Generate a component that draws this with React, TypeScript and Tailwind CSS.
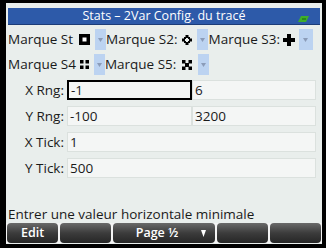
import React from 'react';

const font = { fontFamily: '"Open Sans", "Noto Sans", sans-serif' };

function MarkIcon({ kind }: { kind: number }) {
  if (kind === 1)
    return (
      <svg width="11" height="11" viewBox="0 0 11 11">
        <rect x="0" y="0" width="11" height="11" fill="#000" />
        <rect x="3.5" y="3.5" width="4" height="4" fill="#fff" />
      </svg>
    );
  if (kind === 2)
    return (
      <svg width="10" height="10" viewBox="0 0 10 10">
        <rect x="3.5" y="0" width="3" height="3" fill="#000" />
        <rect x="0" y="3.5" width="3" height="3" fill="#000" />
        <rect x="7" y="3.5" width="3" height="3" fill="#000" />
        <rect x="3.5" y="7" width="3" height="3" fill="#000" />
        <rect x="2" y="2" width="2" height="2" fill="#000" />
        <rect x="6" y="2" width="2" height="2" fill="#000" />
        <rect x="2" y="6" width="2" height="2" fill="#000" />
        <rect x="6" y="6" width="2" height="2" fill="#000" />
      </svg>
    );
  if (kind === 3)
    return (
      <svg width="12" height="12" viewBox="0 0 12 12">
        <rect x="4" y="0" width="4" height="12" fill="#000" />
        <rect x="0" y="4" width="12" height="4" fill="#000" />
      </svg>
    );
  if (kind === 4)
    return (
      <svg width="9" height="9" viewBox="0 0 9 9">
        <rect x="0" y="0" width="3.5" height="3.5" fill="#000" />
        <rect x="5.5" y="0" width="3.5" height="3.5" fill="#000" />
        <rect x="0" y="5.5" width="3.5" height="3.5" fill="#000" />
        <rect x="5.5" y="5.5" width="3.5" height="3.5" fill="#000" />
      </svg>
    );
  return (
    <svg width="10" height="10" viewBox="0 0 10 10">
      <rect x="0" y="0" width="3.5" height="3.5" fill="#000" />
      <rect x="6.5" y="0" width="3.5" height="3.5" fill="#000" />
      <rect x="3" y="3" width="4" height="4" fill="#000" />
      <rect x="0" y="6.5" width="3.5" height="3.5" fill="#000" />
      <rect x="6.5" y="6.5" width="3.5" height="3.5" fill="#000" />
    </svg>
  );
}

function Mark({
  label,
  kind,
  iconW,
  boxW = 'w-[11px]',
}: {
  label: string;
  kind: number;
  iconW: string;
  boxW?: string;
}) {
  return (
    <div className="flex items-center h-full">
      <span className="whitespace-nowrap">{label}</span>
      <div className={`${iconW} h-full flex items-center justify-center`}>
        <MarkIcon kind={kind} />
      </div>
      <div className={`${boxW} h-full bg-[#bcd3f1] flex items-center justify-center`}>
        <svg width="5" height="4" viewBox="0 0 5 4">
          <polygon points="0,0 5,0 2.5,4" fill="#8b9cb8" />
        </svg>
      </div>
    </div>
  );
}

function Field({ value, className = '' }: { value: string; className?: string }) {
  return (
    <div className={`h-full bg-[#f4f6f5] border border-[#dbe1de] flex items-center pl-[2px] ${className}`}>
      {value}
    </div>
  );
}

function SoftKey({ label, className = 'w-[51px]', arrow = false }: { label: string; className?: string; arrow?: boolean }) {
  return (
    <div
      className={`${className} h-full rounded-[4px] bg-gradient-to-b from-[#6a6a6a] via-[#3c3c3c] to-[#262626] text-white text-[12.5px] font-semibold flex items-center justify-center relative`}
    >
      {label}
      {arrow && (
        <svg className="absolute right-[9px] top-[7px]" width="5" height="7" viewBox="0 0 5 7">
          <polygon points="0,0 5,0 2.5,7" fill="#fff" />
        </svg>
      )}
    </div>
  );
}

export default function App() {
  return (
    <div className="w-[326px] h-[248px] bg-black pt-[3px] pl-[6px] pr-[4px] pb-[4px]" style={font}>
      <div className="h-full bg-[#e9eeec] flex flex-col text-[13.5px] text-[#1a1a1a]">
        <div className="mx-[2px] mt-[5px] h-[17px] bg-[#2d5aa9] border-b border-[#1c3c78] text-white text-[12.5px] flex items-center justify-center relative">
          Stats – 2Var Config. du tracé
          <svg className="absolute right-[11px] bottom-[2px]" width="11" height="6" viewBox="0 0 11 6">
            <polygon points="3,0 11,0 8,6 0,6" fill="#3fae2a" />
            <rect x="4" y="2" width="4" height="2" fill="#2a8a1a" />
          </svg>
        </div>

        <div className="mt-[4px] h-[21px] pl-[2px] flex items-center">
          <Mark label="Marque St" kind={1} iconW="w-[22px]" />
          <Mark label="Marque S2:" kind={2} iconW="w-[20px]" />
          <Mark label="Marque S3:" kind={3} iconW="w-[19px]" boxW="w-[14px]" />
        </div>
        <div className="mt-[4px] h-[21px] pl-[2px] flex items-center">
          <Mark label="Marque S4" kind={4} iconW="w-[18px]" />
          <Mark label="Marque S5:" kind={5} iconW="w-[22px]" />
        </div>

        <div className="mt-[5px] flex flex-col gap-[6px]">
          <div className="h-[20px] flex items-center">
            <div className="w-[61px] text-right pr-[3px]">X Rng:</div>
            <Field value="-1" className="w-[125px] !border-2 !border-black" />
            <Field value="6" className="flex-1 mr-[6px]" />
          </div>
          <div className="h-[20px] flex items-center">
            <div className="w-[61px] text-right pr-[3px]">Y Rng:</div>
            <Field value="-100" className="w-[125px]" />
            <Field value="3200" className="flex-1 mr-[6px]" />
          </div>
          <div className="h-[20px] flex items-center">
            <div className="w-[61px] text-right pr-[3px]">X Tick:</div>
            <Field value="1" className="flex-1 mr-[6px]" />
          </div>
          <div className="h-[20px] flex items-center">
            <div className="w-[61px] text-right pr-[3px]">Y Tick:</div>
            <Field value="500" className="flex-1 mr-[6px]" />
          </div>
        </div>

        <div className="mt-auto pl-[2px] leading-[16px]">Entrer une valeur horizontale minimale</div>
        <div className="h-[20px] mt-[1px] mb-[1px] px-[1px] flex gap-[2px] bg-[#f4f4f4]">
          <SoftKey label="Edit" />
          <SoftKey label="" />
          <SoftKey label="Page ½" className="w-[102px] pr-[14px]" arrow />
          <SoftKey label="" />
          <SoftKey label="" className="flex-1" />
        </div>
      </div>
    </div>
  );
}
